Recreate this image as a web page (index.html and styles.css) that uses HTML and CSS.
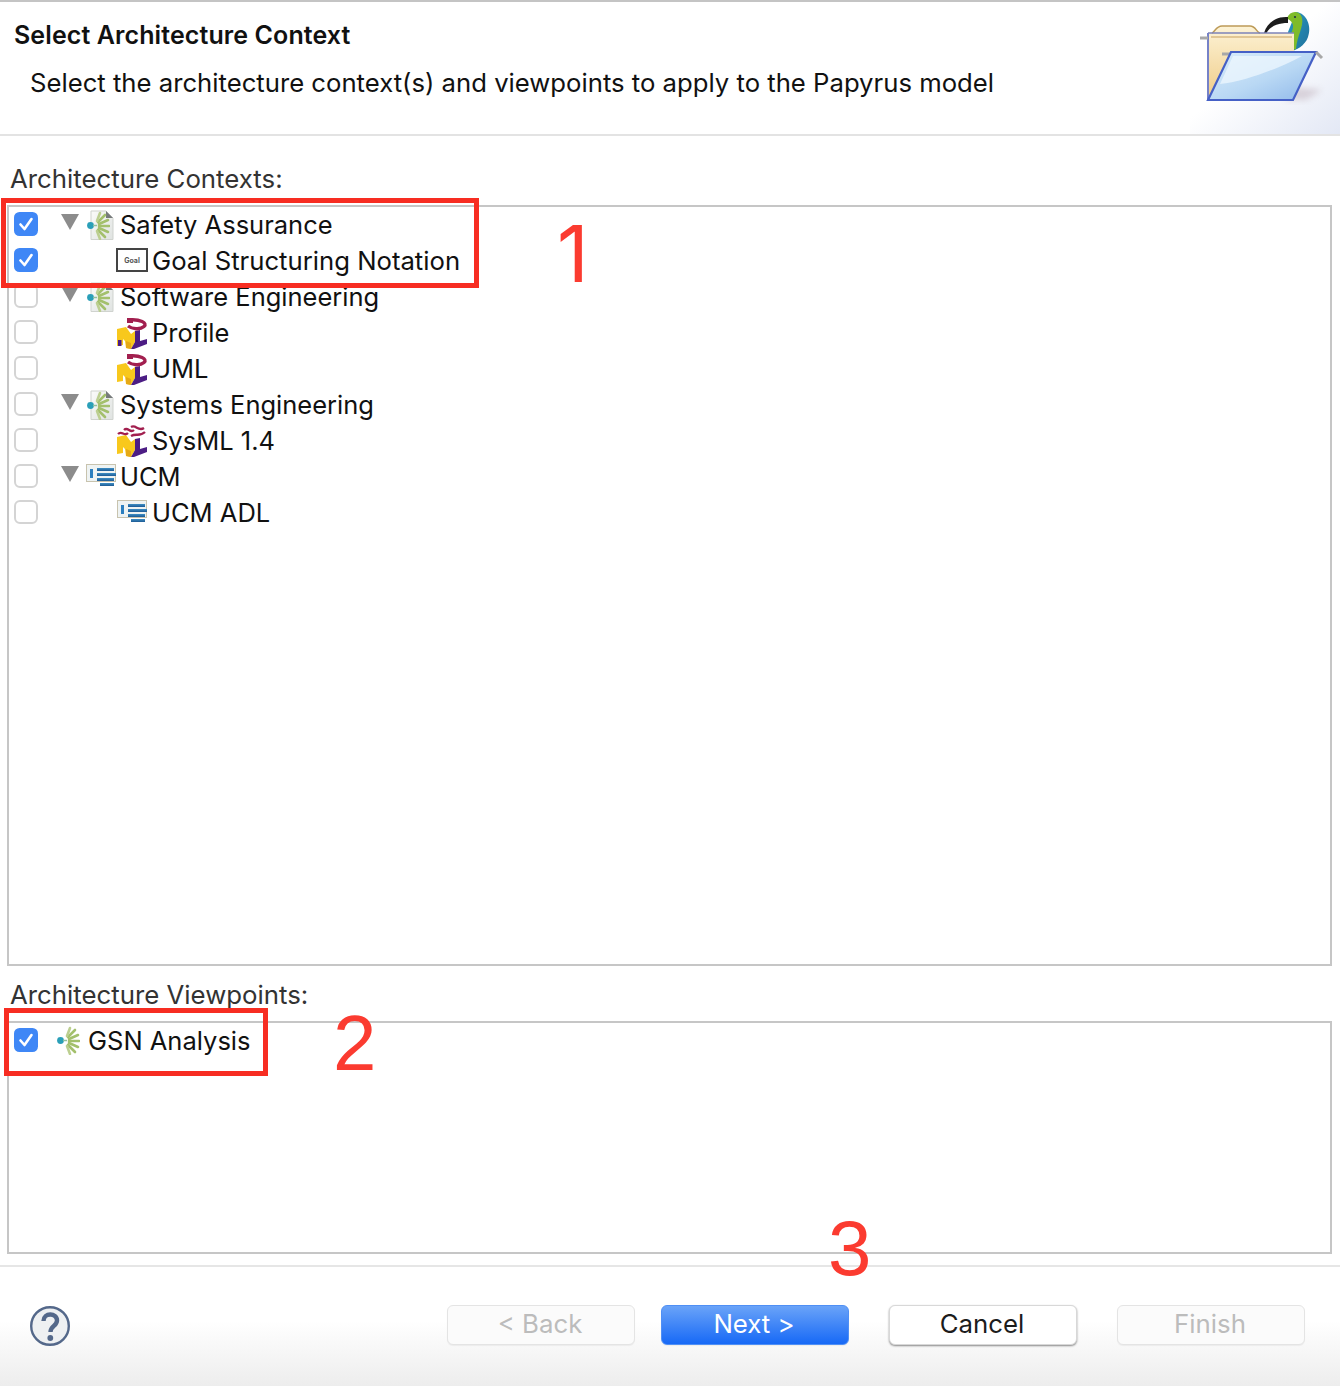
FILE: index.html
```html
<!DOCTYPE html>
<html lang="en">
<head>
<meta charset="utf-8">
<title>Select Architecture Context</title>
<link rel="stylesheet" href="styles.css">
</head>
<body>
<svg class="defs" width="0" height="0" aria-hidden="true">
  <defs>
    <linearGradient id="ucmbar" x1="0" y1="0" x2="0" y2="1"><stop offset="0" stop-color="#3f8fc4"/><stop offset="1" stop-color="#1d5a94"/></linearGradient>
    <linearGradient id="docfill" x1="0" y1="0" x2="1" y2="1"><stop offset="0" stop-color="#fbfbfa"/><stop offset="1" stop-color="#dfe3e1"/></linearGradient>
    <linearGradient id="folderBack" x1="0" y1="0" x2="0" y2="1"><stop offset="0" stop-color="#fdf3d6"/><stop offset="1" stop-color="#efcb86"/></linearGradient>
    <linearGradient id="folderFront" x1="0" y1="0" x2="1" y2="1"><stop offset="0" stop-color="#dceefb"/><stop offset=".55" stop-color="#b9d8f4"/><stop offset="1" stop-color="#8fb8ea"/></linearGradient>
    <linearGradient id="birdBody" x1="0" y1="0" x2="1" y2="1"><stop offset="0" stop-color="#2a9ac0"/><stop offset="1" stop-color="#1f6f9c"/></linearGradient>
    <filter id="soft" x="-10%" y="-10%" width="120%" height="120%"><feGaussianBlur stdDeviation="0.55"/></filter>
    <filter id="softer" x="-30%" y="-30%" width="160%" height="160%"><feGaussianBlur stdDeviation="3"/></filter>
    <filter id="iconblur" x="-10%" y="-10%" width="120%" height="120%"><feGaussianBlur stdDeviation="0.4"/></filter>
    <symbol id="burst" viewBox="0 0 24 30">
      <g fill="none" stroke="#a3c06c" stroke-width="2.600" stroke-linecap="round" filter="url(#iconblur)">
        <path d="M12 12 L19 5"/><path d="M11 11 L14 3" stroke="#bccf90"/><path d="M13 14 L22 10"/><path d="M13 16 L23 16"/><path d="M13 18 L22 22"/><path d="M12 20 L19 27"/><path d="M11 21 L14 29" stroke="#bccf90"/>
      </g>
      <circle cx="4.500" cy="15.500" r="3.400" fill="#2a9fb8" filter="url(#iconblur)"/>
      <path d="M7 15.500 H11" stroke="#8fc0a0" stroke-width="1.500"/>
    </symbol>
    <symbol id="archdoc" viewBox="0 0 28 30">
      <path d="M5 1 H20 L27 8 V29.500 H5 Z" fill="url(#docfill)" stroke="#d0d3cf"/>
      <path d="M20 1 L27 8 H20 Z" fill="#777b7c"/>
      <svg x="0" y="0" width="24" height="30" viewBox="0 0 24 30"><use href="#burst"/></svg>
    </symbol>
    <symbol id="umlbase" viewBox="0 0 32 32">
      <path d="M1 12 L10 10 L15 17 L19 14 L19 25 L15 32 L10 31 L9 24 L7 22 L7 28 L1 29 Z" fill="#f8c81c"/>
      <path d="M10 24 L15 26 L15 32 L10 31 Z" fill="#e6a915"/>
      <path d="M19 14 L24 13 L24 24 L31 22 L31 27 L18 32 L15 32 L19 25 Z" fill="#4c1d84"/>
    </symbol>
    <symbol id="umlU" viewBox="0 0 32 32">
      <path d="M13 3 C24 2 32 6 28 9.500 C24 13 16 12 12 9" fill="none" stroke="#a21f4f" stroke-width="3.400"/>
      <path d="M11 1 L17 1 L17 6 L11 6 Z" fill="#a21f4f"/>
    </symbol>
    <symbol id="ucmicon" viewBox="0 0 30 22">
      <rect x="0.500" y="0.500" width="29" height="17" fill="#eef3f3" stroke="#c8c3ae"/>
      <rect x="4" y="5" width="3" height="9" fill="#2c7fbf"/>
      <rect x="11" y="4" width="17" height="3" fill="url(#ucmbar)"/>
      <rect x="11" y="9" width="19" height="3" fill="url(#ucmbar)"/>
      <rect x="11" y="14" width="17" height="3" fill="url(#ucmbar)"/>
      <rect x="14" y="19" width="14" height="3" fill="url(#ucmbar)"/>
    </symbol>
    <symbol id="check" viewBox="0 0 24 24">
      <rect x="0" y="0" width="24" height="24" rx="5.500" fill="#3f87f6"/>
      <path d="M6.500 12.500 L10.500 17 L17.500 7" fill="none" stroke="#fff" stroke-width="2.600" stroke-linecap="round" stroke-linejoin="round"/>
    </symbol>
  </defs>
</svg>

<main class="dialog">
  <header class="banner">
    <div class="banner-text">
      <h1 class="banner-title">Select Architecture Context</h1>
      <p class="banner-sub">Select the architecture context(s) and viewpoints to apply to the Papyrus model</p>
    </div>
    <div class="banner-art">
      <svg class="wizard-icon" width="150" height="132" viewBox="0 0 150 132">
        <path d="M95 84 L132 88 L116 98 L96 98 Z" fill="#b9a8b4" opacity=".45" filter="url(#softer)"/>
        <g filter="url(#soft)">
          <path d="M106 10 C117 11 122 25 118 35 C115 44 106 48 100 50 L98 30 Z" fill="url(#birdBody)"/>
          <path d="M97 16 C100 8 110 8 112 16 C114 24 107 34 106 47 L96 50 C93 40 104 32 103 23 C102 19 99 18 97 16 Z" fill="#7fbb2c"/>
          <path d="M74 31 C77 21 86 14 98 15 L98 21 C88 21 80 24 76 32 Z" fill="#1c1c1c"/>
          <circle cx="105" cy="15" r="1.100" fill="#234"/>
          <path d="M18 31 H22 C25 30 26 24 32 24 H60 C66 24 66 30 70 31 H104 V50 L30 98 H18 Z" fill="url(#folderBack)"/>
          <path d="M22 31 C25 30 26 24 32 24 H60 C66 24 66 30 70 31" fill="none" stroke="#bd9b58" stroke-width="1.500"/>
          <path d="M21 35 H102" stroke="#c79f5f" stroke-width="1.200"/>
          <path d="M18 31 H104" stroke="#7d83b8" stroke-width="1.500"/>
          <path d="M18 31 V98" stroke="#7682c8" stroke-width="2"/>
          <path d="M10 36 H18" stroke="#a8a8a8" stroke-width="3"/>
          <path d="M32 52 H40" stroke="#a8a8a8" stroke-width="3"/>
          <path d="M18 98 L41 50 H126 L103 98 Z" fill="url(#folderFront)" stroke="#4560c6" stroke-width="2.200"/>
          <path d="M30 82 C52 80 86 68 112 54 H43 Z" fill="#eef7fd" opacity=".75"/>
          <path d="M126 50 L132 56" stroke="#a8a8a8" stroke-width="3"/>
        </g>
      </svg>
    </div>
  </header>

  <section class="content">
    <div class="group group-contexts">
      <h2 class="group-label">Architecture Contexts:</h2>
      <ul class="tree">
        <li class="row">
          <svg class="cb" width="24" height="24"><use href="#check"/></svg>
          <span class="tw"></span>
          <svg class="ico-root" width="28" height="30"><use href="#archdoc"/></svg>
          <span class="row-text">Safety Assurance</span>
        </li>
        <li class="row">
          <svg class="cb" width="24" height="24"><use href="#check"/></svg>
          <span class="tw tw-none"></span>
          <span class="ico-child gsn-box"><span class="gsn-word">Goal</span></span>
          <span class="row-text row-text-wide">Goal Structuring Notation</span>
        </li>
        <li class="row">
          <span class="cb cb-off"></span>
          <span class="tw"></span>
          <svg class="ico-root" width="28" height="30"><use href="#archdoc"/></svg>
          <span class="row-text">Software Engineering</span>
        </li>
        <li class="row">
          <span class="cb cb-off"></span>
          <span class="tw tw-none"></span>
          <svg class="ico-child" width="32" height="32" viewBox="0 0 32 32"><use href="#umlbase"/><use href="#umlU"/><rect x="2" y="23" width="3.500" height="6" fill="#4c1d84"/></svg>
          <span class="row-text">Profile</span>
        </li>
        <li class="row">
          <span class="cb cb-off"></span>
          <span class="tw tw-none"></span>
          <svg class="ico-child" width="32" height="32" viewBox="0 0 32 32"><use href="#umlbase"/><use href="#umlU"/></svg>
          <span class="row-text">UML</span>
        </li>
        <li class="row">
          <span class="cb cb-off"></span>
          <span class="tw"></span>
          <svg class="ico-root" width="28" height="30"><use href="#archdoc"/></svg>
          <span class="row-text">Systems Engineering</span>
        </li>
        <li class="row">
          <span class="cb cb-off"></span>
          <span class="tw tw-none"></span>
          <svg class="ico-child" width="32" height="32" viewBox="0 0 32 32"><use href="#umlbase"/><path d="M2 9 C6 5 8 12 12 8 M8 5 C12 1 14 9 18 5 M15 2 C20 -1 22 7 28 3 M15 11 C20 8 24 12 29 7" fill="none" stroke="#a21f4f" stroke-width="2.300"/></svg>
          <span class="row-text">SysML 1.4</span>
        </li>
        <li class="row">
          <span class="cb cb-off"></span>
          <span class="tw"></span>
          <svg class="ico-root ico-ucm" width="30" height="22"><use href="#ucmicon"/></svg>
          <span class="row-text">UCM</span>
        </li>
        <li class="row">
          <span class="cb cb-off"></span>
          <span class="tw tw-none"></span>
          <svg class="ico-child ico-ucm" width="30" height="22"><use href="#ucmicon"/></svg>
          <span class="row-text">UCM ADL</span>
        </li>
      </ul>
    </div>

    <div class="group group-viewpoints">
      <h2 class="group-label">Architecture Viewpoints:</h2>
      <ul class="tree">
        <li class="row">
          <svg class="cb" width="24" height="24"><use href="#check"/></svg>
          <svg class="ico-view" width="24" height="30"><use href="#burst"/></svg>
          <span class="row-text">GSN Analysis</span>
        </li>
      </ul>
    </div>
  </section>

  <footer class="actions">
    <svg class="help" width="40" height="40" viewBox="0 0 40 40">
      <ellipse cx="20" cy="20" rx="18.800" ry="18.800" fill="#eef0f2" stroke="#54688a" stroke-width="2.400"/>
      <path d="M13.500 15 C13.500 6.500 27 6.500 27 14.500 C27 20 20.500 20 20.500 26" fill="none" stroke="#54688a" stroke-width="4.400"/>
      <circle cx="20.300" cy="32" r="2.900" fill="#54688a"/>
    </svg>
    <div class="buttons">
      <button class="btn" disabled>&lt; Back</button>
      <button class="btn btn-primary">Next &gt;</button>
      <button class="btn btn-normal">Cancel</button>
      <button class="btn" disabled>Finish</button>
    </div>
  </footer>

  <div class="mark mark-1"></div>
  <div class="mark mark-2"></div>
  <span class="num num-1">1</span>
  <span class="num num-2">2</span>
  <span class="num num-3">3</span>
</main>
</body>
</html>
```
FILE: styles.css
```css
* { box-sizing: border-box; }
html, body { margin: 0; padding: 0; background: #fff; }
body { font-family: "Inter", "Liberation Sans", sans-serif; color: #111; }
.defs { position: absolute; }
.dialog { position: relative; width: 1340px; height: 1386px; display: flex; flex-direction: column; overflow: hidden; }

.banner { height: 136px; flex: none; border-top: 2px solid #c4c4c4; border-bottom: 2px solid #e3e3e3; display: flex; justify-content: space-between; background: #fff; }
.banner-text { padding: 15px 0 0 14px; }
.banner-title { margin: 0; font-size: 25px; line-height: 36px; font-weight: 600; color: #111; letter-spacing: .1px; }
.banner-sub { margin: 12px 0 0 16px; font-size: 25.700px; line-height: 36px; color: #111; }
.banner-art { width: 150px; background: linear-gradient(140deg, #fff 0%, #fff 45%, #e3e8f5 100%); }
.wizard-icon { display: block; }

.content { flex: 1; padding: 0 8px 0 7px; display: flex; flex-direction: column; }
.group-label { margin: 0; font-size: 25.800px; line-height: 34px; font-weight: 400; color: #333; padding: 0 0 9px 3px; }
.group-contexts { padding-top: 26px; }
.group-contexts .tree { height: 761px; }
.group-viewpoints { padding-top: 12px; }
.group-viewpoints .tree { height: 233px; }
.tree { list-style: none; margin: 0; padding: 0; border: 2px solid #c6c6c6; background: #fff; }
.row { height: 36px; display: flex; align-items: center; padding-left: 5px; }
.row-text { font-size: 25.500px; line-height: 36px; color: #111; white-space: nowrap; }
.row-text-wide { font-size: 25.700px; }

.cb { width: 24px; height: 24px; flex: none; display: block; margin-top: -3px; }
.cb-off { border: 2px solid #d4d4d4; border-radius: 6px; background: #fff; }
.tw { width: 0; height: 0; flex: none; margin: -6px 0 0 23px; border-left: 9px solid transparent; border-right: 9px solid transparent; border-top: 16px solid #8c8c8c; }
.tw-none { border-color: transparent; }
.ico-root { flex: none; margin: 0 6px 0 7px; }
.ico-root.ico-ucm { margin: -4px 4px 0 7px; }
.ico-child { flex: none; margin: 0 4px 0 37px; }
.ico-child.ico-ucm { margin: -4px 5px 0 38px; }
.gsn-box { width: 32px; height: 24px; border: 2px solid #444; background: #fff; display: flex; align-items: center; justify-content: center; margin-top: -2px; }
.gsn-word { font-size: 7px; font-weight: 700; color: #555; line-height: 1; }
.ico-view { flex: none; margin: -2px 8px 0 18px; }

.actions { height: 121px; flex: none; border-top: 2px solid #e6e6e6; background: linear-gradient(#fff 0%, #fff 45%, #ededed 100%); display: flex; align-items: flex-start; justify-content: space-between; padding: 38px 35px 0 30px; }
.help { display: block; margin-top: 1px; }
.buttons { display: flex; gap: 0; }
.btn { width: 188px; height: 40px; border-radius: 6px; border: 1px solid #e4e4e4; background: #fbfbfb; color: #bcbcbc; font: 400 25.800px/36px "Inter", "Liberation Sans", sans-serif; padding: 0 2px 2px 0; box-shadow: 0 1px 1px rgba(0,0,0,.05); }
.btn + .btn { margin-left: 40px; }
.btn:nth-child(2) { margin-left: 26px; }
.btn-primary { background: linear-gradient(#6aa3f8, #1769f6); border-color: #4f8ff5; color: #fff; }
.btn-normal { background: #fff; border-color: #d8d8d8; color: #1c1c1c; box-shadow: 0 1px 2px rgba(0,0,0,.45); }

.mark { position: absolute; border: 5px solid #f72d22; }
.mark-1 { left: 1px; top: 198px; width: 478px; height: 90px; }
.mark-2 { left: 4px; top: 1008px; width: 264px; height: 68px; }
.num { position: absolute; color: #fb3b30; font: 400 78px/78px "Liberation Sans", sans-serif; }
.num-1 { left: 557px; top: 215px; font-family: "Inter", sans-serif; font-weight: 400; }
.num-2 { left: 333px; top: 1004px; }
.num-3 { left: 828px; top: 1209px; }
```
